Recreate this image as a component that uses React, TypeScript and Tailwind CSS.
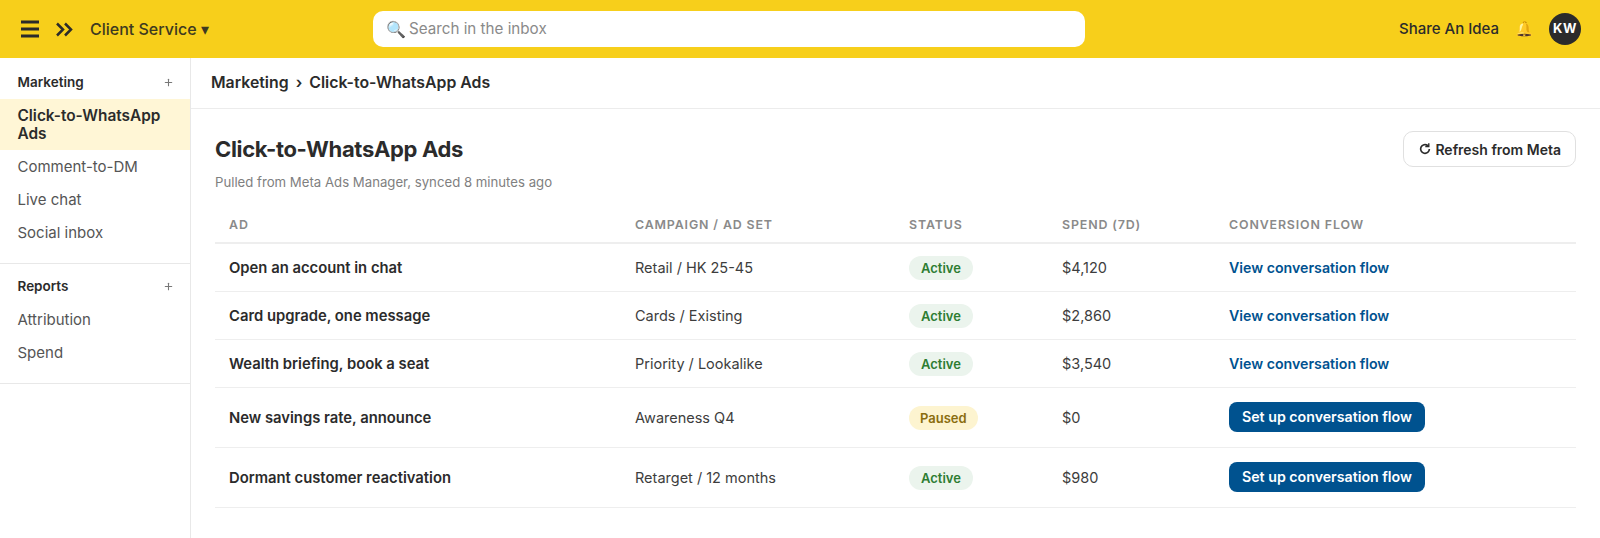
import React from 'react';
import { Plus } from 'lucide-react';

const rows = [
  { ad: 'Open an account in chat', campaign: 'Retail / HK 25-45', status: 'Active', spend: '$4,120', live: true },
  { ad: 'Card upgrade, one message', campaign: 'Cards / Existing', status: 'Active', spend: '$2,860', live: true },
  { ad: 'Wealth briefing, book a seat', campaign: 'Priority / Lookalike', status: 'Active', spend: '$3,540', live: true },
  { ad: 'New savings rate, announce', campaign: 'Awareness Q4', status: 'Paused', spend: '$0', live: false },
  { ad: 'Dormant customer reactivation', campaign: 'Retarget / 12 months', status: 'Active', spend: '$980', live: false },
];

function NavGroup({ title, items, active }: { title: string; items: string[]; active?: string }) {
  return (
    <div className="border-b border-[#e8e8e8] pt-[13px] pb-[14px]">
      <div className="flex h-[18px] items-center justify-between pr-[16px] pl-[17.5px] text-[13.5px] font-semibold text-[#2b2b2b]">
        <span>{title}</span>
        <Plus size={11} strokeWidth={2.4} className="text-[#777]" />
      </div>
      <ul className="mt-[8px]">
        {items.map((item) =>
          item === active ? (
            <li key={item} className="bg-[#fff6d6] px-[17.5px] pt-[8px] pb-[7px] text-[15.4px] leading-[18px] font-semibold text-[#2b2b2b]">
              {item}
            </li>
          ) : (
            <li key={item} className="px-[17.5px] py-[8px] text-[15px] leading-[17px] text-[#555]">
              {item}
            </li>
          ),
        )}
      </ul>
    </div>
  );
}

export default function App() {
  return (
    <div className="flex h-[538px] flex-col overflow-hidden bg-white font-['Inter',sans-serif] text-[#2b2b2b]">
      <header className="flex h-[58px] shrink-0 items-center bg-[#f7cf1b] pr-[19px] pl-[21px]">
        <svg width="18" height="18" viewBox="0 0 18 18" className="text-[#2b2b2b]">
          <path d="M0 2h18M0 9h18M0 16h18" stroke="currentColor" strokeWidth="3.2" />
        </svg>
        <svg width="19" height="15" viewBox="0 0 19 15" fill="none" className="ml-[16px] text-[#2b2b2b]">
          <path d="M2 1.5 8 7.5 2 13.5M10 1.5l6 6-6 6" stroke="currentColor" strokeWidth="2.5" />
        </svg>
        <span className="ml-[16px] w-[283px] text-[16px] font-medium text-[#3d3a20]">Client Service ▾</span>
        <div className="flex h-[36px] w-[712px] items-center rounded-[10px] bg-white pl-[13px] text-[15.2px] text-[#8a8a8a]">
          <span className="mr-[3px] text-[16px] leading-none">🔍</span>
          Search in the inbox
        </div>
        <div className="ml-auto flex items-center">
          <span className="text-[15px] font-medium text-[#2b2b2b]">Share An Idea</span>
          <span className="ml-[16px] text-[15px]">🔔</span>
          <span className="ml-[15px] flex h-[32px] w-[32px] items-center justify-center rounded-full bg-[#2b2b2b] text-[13px] font-bold tracking-[0.5px] text-white">
            KW
          </span>
        </div>
      </header>
      <div className="flex min-h-0 flex-1">
        <aside className="w-[191px] shrink-0 border-r border-[#e8e8e8] pt-[2px]">
          <NavGroup
            title="Marketing"
            items={['Click-to-WhatsApp Ads', 'Comment-to-DM', 'Live chat', 'Social inbox']}
            active="Click-to-WhatsApp Ads"
          />
          <NavGroup title="Reports" items={['Attribution', 'Spend']} />
        </aside>
        <main className="min-w-0 flex-1">
          <div className="flex h-[51px] items-center gap-[7px] border-b border-[#ececec] pl-[20px] text-[15.85px] font-semibold text-[#2b2b2b]">
            <span>Marketing</span>
            <span>›</span>
            <span>Click-to-WhatsApp Ads</span>
          </div>
          <section className="pt-[21px] pr-[24px] pl-[24px]">
            <div className="flex items-start justify-between">
              <div className="pt-[5px]">
                <h1 className="text-[22px] leading-[28px] font-bold tracking-[-0.33px] text-[#2b2b2b]">Click-to-WhatsApp Ads</h1>
                <p className="mt-[11px] text-[13.2px] leading-[16px] text-[#808080]">
                  Pulled from Meta Ads Manager, synced 8 minutes ago
                </p>
              </div>
              <button className="mt-[1px] flex h-[36px] items-center gap-[3px] rounded-[10px] border border-[#e0e0e0] bg-white px-[14px] text-[14px] font-semibold text-[#2b2b2b]">
                <svg width="14" height="14" viewBox="0 0 24 24" fill="none" stroke="currentColor" strokeWidth="2.8">
                  <path d="M19.5 12a7.5 7.5 0 1 1-3-6L18 7" />
                  <path d="M18.5 2v6h-6" strokeWidth="2.4" />
                </svg>
                Refresh from Meta
              </button>
            </div>
            <table className="mt-[15px] w-full table-fixed border-collapse text-[14.5px]">
              <colgroup>
                <col className="w-[406px]" />
                <col className="w-[274px]" />
                <col className="w-[153px]" />
                <col className="w-[167px]" />
                <col />
              </colgroup>
              <thead>
                <tr className="h-[38px] border-b-2 border-[#eeeeee] text-left text-[12.4px] tracking-[0.07em] text-[#8a8a8a]">
                  {['AD', 'CAMPAIGN / AD SET', 'STATUS', 'SPEND (7D)', 'CONVERSION FLOW'].map((h) => (
                    <th key={h} className="px-[14px] pt-[3px] font-semibold">
                      {h}
                    </th>
                  ))}
                </tr>
              </thead>
              <tbody>
                {rows.map((r) => (
                  <tr key={r.ad} className={`border-b border-[#eeeeee] ${r.live ? 'h-[48px]' : 'h-[60px]'}`}>
                    <td className="px-[14px] pt-[2px] text-[14.8px] font-semibold text-[#2b2b2b]">{r.ad}</td>
                    <td className="px-[14px] pt-[2px] text-[#3d3d3d]">{r.campaign}</td>
                    <td className="px-[14px] pt-[2px]">
                      {r.status === 'Active' ? (
                        <span className="inline-block rounded-full bg-[#ebf4ed] px-[12px] py-[4px] text-[13px] leading-[16px] font-semibold text-[#2e7d32]">
                          Active
                        </span>
                      ) : (
                        <span className="inline-block rounded-full bg-[#fdf4d0] px-[11px] py-[4px] text-[13px] leading-[16px] font-semibold text-[#8a6d0f]">
                          Paused
                        </span>
                      )}
                    </td>
                    <td className="px-[14px] pt-[2px] text-[#3d3d3d]">{r.spend}</td>
                    <td className={r.live ? 'px-[14px] pt-[2px]' : 'px-[14px]'}>
                      {r.live ? (
                        <a className="text-[14.2px] font-semibold text-[#00528f]">View conversation flow</a>
                      ) : (
                        <button className="h-[30px] rounded-[8px] bg-[#00528f] px-[13px] text-[14.2px] font-semibold text-white">
                          Set up conversation flow
                        </button>
                      )}
                    </td>
                  </tr>
                ))}
              </tbody>
            </table>
          </section>
        </main>
      </div>
    </div>
  );
}
